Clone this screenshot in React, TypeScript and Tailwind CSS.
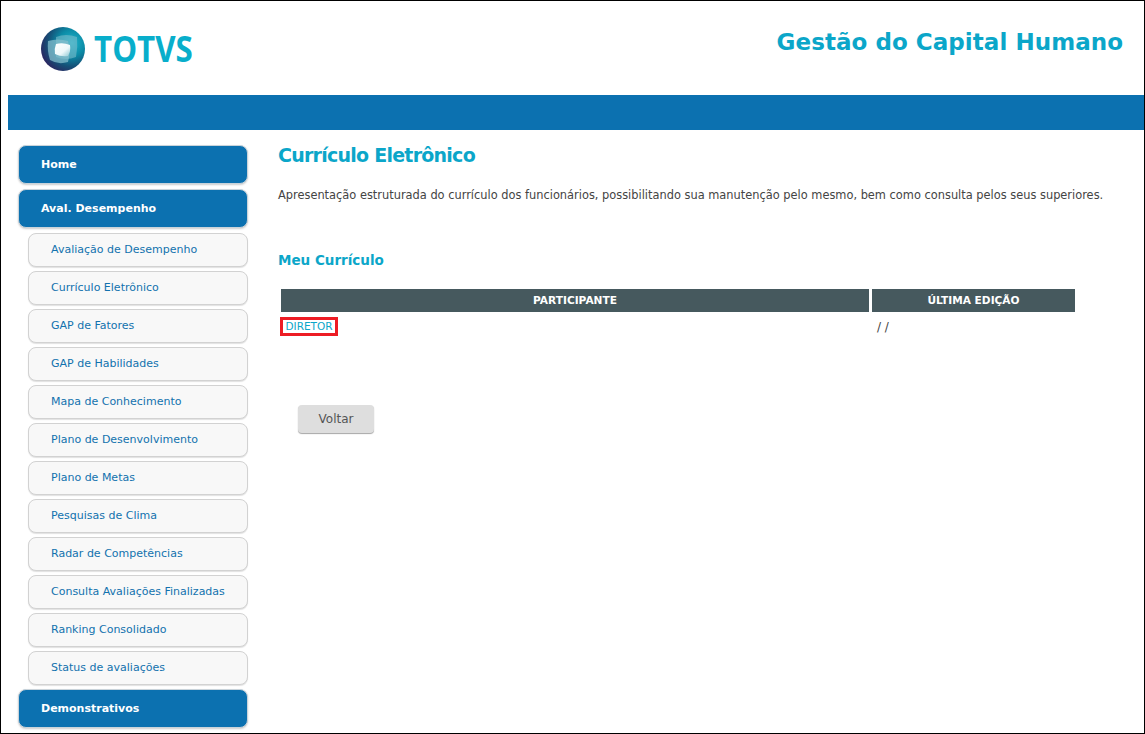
const subItems = [
  'Avaliação de Desempenho',
  'Currículo Eletrônico',
  'GAP de Fatores',
  'GAP de Habilidades',
  'Mapa de Conhecimento',
  'Plano de Desenvolvimento',
  'Plano de Metas',
  'Pesquisas de Clima',
  'Radar de Competências',
  'Consulta Avaliações Finalizadas',
  'Ranking Consolidado',
  'Status de avaliações',
];

function LogoMark() {
  return (
    <svg width="46" height="46" viewBox="0 0 46 46" className="shrink-0">
      <defs>
        <radialGradient id="sphere" cx="0.7" cy="0.36" r="0.75">
          <stop offset="0" stopColor="#1fb4cb" />
          <stop offset="0.4" stopColor="#0b8ba6" />
          <stop offset="0.72" stopColor="#155077" />
          <stop offset="1" stopColor="#2c2560" />
        </radialGradient>
        <linearGradient id="plate" x1="0" y1="0" x2="1" y2="1">
          <stop offset="0" stopColor="#ffffff" />
          <stop offset="0.6" stopColor="#eef8fa" />
          <stop offset="1" stopColor="#8cc8d4" />
        </linearGradient>
      </defs>
      <circle cx="23" cy="23" r="22" fill="url(#sphere)" />
      <path d="M16 11 Q26 7 37 11 Q38 21 36 31 Q26 35 16 31 Z" fill="#7cbccb" opacity="0.6" />
      <path d="M8 15 Q18 12 28 15 Q31 25 28 36 Q18 39 10 34 Q7 25 8 15 Z" fill="#86bfce" opacity="0.75" />
      <path d="M16 18 Q23 16 30 19 Q31 25 28 30 Q21 31 15 28 Q14 23 16 18 Z" fill="url(#plate)" />
    </svg>
  );
}

function MainItem({ label }: { label: string }) {
  return (
    <a className="flex h-[39px] items-center rounded-[8px] border border-[#c9d3da] bg-[#0c71b0] pt-[1px] pl-[22px] text-[11px] font-bold text-white shadow-[0_1px_2px_rgba(0,0,0,0.2)]">
      {label}
    </a>
  );
}

function SubItem({ label }: { label: string }) {
  return (
    <a className="ml-[10px] flex h-[34px] items-center rounded-[8px] border border-[#d2d2d2] bg-[#f8f8f8] pl-[22px] text-[11px] text-[#1272ae] shadow-[0_1px_1px_rgba(0,0,0,0.12)]">
      {label}
    </a>
  );
}

export default function App() {
  return (
    <div className="h-[734px] w-[1145px] overflow-hidden border border-black bg-white font-['DejaVu_Sans',sans-serif] text-[#444]">
      <header className="flex h-[94px] items-start justify-between pl-[39px] pr-[21px]">
        <div className="mt-[25px] flex items-center gap-[8px]">
          <LogoMark />
          <span className="origin-left scale-x-[0.87] font-['Open_Sans',sans-serif] text-[36px] leading-none font-bold text-[#08aecb]">
            TOTVS
          </span>
        </div>
        <h1 className="mt-[26px] text-[23px] leading-[30px] font-bold tracking-[0.05px] text-[#0ba6c9]">
          Gestão do Capital Humano
        </h1>
      </header>

      <div className="ml-[7px] h-[35px] bg-[#0c71b0]" />

      <div className="flex">
        <nav className="mt-[15px] ml-[17px] flex w-[230px] shrink-0 flex-col">
          <MainItem label="Home" />
          <div className="mt-[5px]">
            <MainItem label="Aval. Desempenho" />
          </div>
          <div className="mt-[5px] flex flex-col gap-[4px]">
            {subItems.map((item) => (
              <SubItem key={item} label={item} />
            ))}
          </div>
          <div className="mt-[4px]">
            <MainItem label="Demonstrativos" />
          </div>
        </nav>

        <main className="ml-[30px] flex-1">
          <h2 className="mt-[13px] text-[19px] leading-[24px] font-bold tracking-[-0.75px] text-[#0ba6c9]">
            Currículo Eletrônico
          </h2>
          <p className="mt-[19px] text-[11.4px] leading-[18px] whitespace-nowrap">
            Apresentação estruturada do currículo dos funcionários, possibilitando sua manutenção pelo mesmo, bem como
            consulta pelos seus superiores.
          </p>
          <h3 className="mt-[47px] text-[13.5px] leading-[18px] font-bold text-[#0ba6c9]">Meu Currículo</h3>

          <div className="mt-[20px] ml-[3px] flex w-[794px] gap-[3px]">
            <div className="flex h-[23px] w-[588px] items-center justify-center bg-[#46595e] text-[10.6px] font-bold text-white">
              PARTICIPANTE
            </div>
            <div className="flex h-[23px] w-[203px] items-center justify-center bg-[#46595e] text-[10.6px] font-bold text-white">
              ÚLTIMA EDIÇÃO
            </div>
          </div>
          <div className="mt-[5px] ml-[2px] flex items-center">
            <a className="flex h-[19px] w-[58px] items-center justify-center border-[3px] border-[#ed1c24] text-[10.5px] text-[#0ba6c9]">
              DIRETOR
            </a>
            <span className="ml-[539px] text-[12px]">/ /</span>
          </div>

          <div className="mt-[69px] ml-[20px] flex h-[28px] w-[76px] items-center justify-center rounded-[4px] bg-[#dedede] text-[12px] text-[#555] shadow-[0_1px_1px_rgba(0,0,0,0.35)]">
            Voltar
          </div>
        </main>
      </div>
    </div>
  );
}
